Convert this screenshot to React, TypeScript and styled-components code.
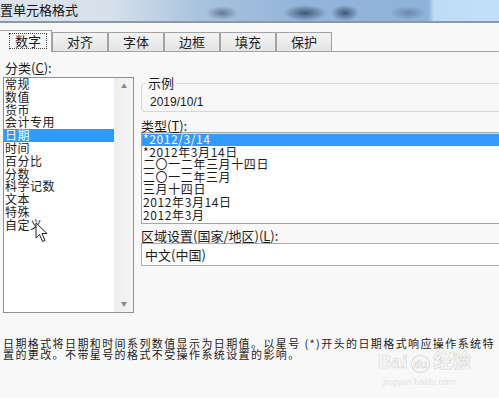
import React from "react";
import styled, { createGlobalStyle } from "styled-components";

const categories = [
  "常规",
  "数值",
  "货币",
  "会计专用",
  "日期",
  "时间",
  "百分比",
  "分数",
  "科学记数",
  "文本",
  "特殊",
  "自定义",
];

const dateTypes = [
  "*2012/3/14",
  "*2012年3月14日",
  "二〇一二年三月十四日",
  "二〇一二年三月",
  "三月十四日",
  "2012年3月14日",
  "2012年3月",
];

const tabs = ["数字", "对齐", "字体", "边框", "填充", "保护"];

const App = () => {
  return (
    <>
      <GlobalStyle />
      <Dialog>
        <TitleBar>置单元格格式</TitleBar>

        <TabRow>
          {tabs.map((t, i) => (
            <Tab key={t} $active={i === 0}>
              {i === 0 ? <FocusRect>{t}</FocusRect> : t}
            </Tab>
          ))}
        </TabRow>

        <Body>
          <LeftCol>
            <Label>
              分类(<u>C</u>):
            </Label>
            <CategoryList>
              <Items>
                {categories.map((c) => (
                  <Item key={c} $selected={c === "日期"}>
                    {c}
                  </Item>
                ))}
              </Items>
              <ScrollBar>
                <Arrow>▲</Arrow>
                <Arrow>▼</Arrow>
              </ScrollBar>
              <Cursor width="14" height="21" viewBox="0 0 14 21">
                <path
                  d="M1 1 L1 16 L4.5 12.5 L7.5 19.5 L10 18.4 L7 11.5 L12 11.5 Z"
                  fill="#fff"
                  stroke="#222"
                  strokeWidth="1"
                  strokeLinejoin="round"
                />
              </Cursor>
            </CategoryList>
          </LeftCol>

          <RightCol>
            <SampleBox>
              <Legend>示例</Legend>
              <SampleValue>2019/10/1</SampleValue>
            </SampleBox>

            <TypeLabel>
              类型(<u>T</u>):
            </TypeLabel>
            <TypeList>
              {dateTypes.map((d, i) => (
                <TypeItem key={d} $selected={i === 0}>
                  {d}
                </TypeItem>
              ))}
            </TypeList>

            <RegionLabel>
              区域设置(国家/地区)(<u>L</u>):
            </RegionLabel>
            <Combo>中文(中国)</Combo>
          </RightCol>
        </Body>

        <Description>
          日期格式将日期和时间系列数值显示为日期值。以星号 (*)开头的日期格式响应操作系统特
          <br />
          置的更改。不带星号的格式不受操作系统设置的影响。
        </Description>

        <Watermark>
          <WmLogo>
            Bai<WmPaw>du</WmPaw>经验
          </WmLogo>
          <WmUrl>jingyan.baidu.com</WmUrl>
        </Watermark>
      </Dialog>
    </>
  );
};

export default App;

const GlobalStyle = createGlobalStyle`
  html, body {
    margin: 0;
    padding: 0;
    background: #f8f8f8;
    overflow: hidden;
  }
  body {
    font-family: "Noto Sans CJK SC", "Liberation Sans", sans-serif;
    color: #1c1c1c;
  }
`;

const Dialog = styled.div`
  position: relative;
  width: 499px;
  height: 398px;
  overflow: hidden;
`;

const TitleBar = styled.div`
  height: 21px;
  border-bottom: 2px solid #8a98a8;
  font-size: 13px;
  line-height: 19px;
  color: #111;
  background:
    radial-gradient(ellipse 16px 7px at 222px 13px, rgba(45, 65, 95, 0.55), transparent),
    radial-gradient(ellipse 22px 8px at 305px 13px, rgba(35, 55, 85, 0.75), transparent),
    radial-gradient(ellipse 14px 8px at 345px 13px, rgba(35, 55, 85, 0.75), transparent),
    radial-gradient(ellipse 18px 7px at 408px 13px, rgba(60, 85, 120, 0.45), transparent),
    linear-gradient(
      90deg,
      #dde4ec 0,
      #d6e0eb 110px,
      #a9c3df 200px,
      #94b5d9 300px,
      #8fb2da 428px,
      #bddcf6 434px,
      #c2e0f9 100%
    );
`;

const TabRow = styled.div`
  display: flex;
  align-items: flex-end;
  padding-top: 7px;
  margin-left: -4px;
  border-bottom: 1px solid #a3a3a3;
`;

const Tab = styled.div<{ $active?: boolean }>`
  box-sizing: border-box;
  width: 56px;
  height: ${(p) => (p.$active ? "22px" : "19px")};
  margin-bottom: ${(p) => (p.$active ? "-1px" : "0")};
  border: 1px solid #a3a3a3;
  border-bottom: none;
  background: ${(p) =>
    p.$active ? "#f8f8f8" : "linear-gradient(#f4f4f4, #e4e4e4)"};
  font-size: 13px;
  line-height: ${(p) => (p.$active ? "19px" : "17px")};
  text-align: center;
  position: relative;
  z-index: ${(p) => (p.$active ? 1 : 0)};
`;

const FocusRect = styled.span`
  display: inline-block;
  margin-left: 8px;
  padding: 0 5px;
  line-height: 14px;
  outline: 1px dotted #444;
`;

const Body = styled.div`
  display: flex;
  padding-left: 3px;
`;

const LeftCol = styled.div`
  width: 131px;
  flex-shrink: 0;
`;

const Label = styled.div`
  margin-top: 9px;
  padding-left: 2px;
  font-size: 13px;
  line-height: 14px;
`;

const CategoryList = styled.div`
  position: relative;
  display: flex;
  box-sizing: border-box;
  height: 236px;
  margin-top: 2px;
  border: 1px solid #8f9092;
  background: #fff;
`;

const Items = styled.div`
  flex: 1;
`;

const Item = styled.div<{ $selected?: boolean }>`
  padding-left: 1px;
  font-size: 12px;
  letter-spacing: 0.5px;
  line-height: 12.8px;
  height: 12.8px;
  white-space: nowrap;
  background: ${(p) => (p.$selected ? "#3399ff" : "transparent")};
  color: ${(p) => (p.$selected ? "#fff" : "#1c1c1c")};
`;

const ScrollBar = styled.div`
  width: 18px;
  display: flex;
  flex-direction: column;
  justify-content: space-between;
  align-items: center;
  padding: 4px 0;
  border-left: 1px solid #ececec;
  background: linear-gradient(90deg, #eeeeee, #f5f5f5);
`;

const Arrow = styled.span`
  font-size: 6px;
  line-height: 8px;
  color: #888;
`;

const Cursor = styled.svg`
  position: absolute;
  left: 31px;
  top: 144px;
`;

const RightCol = styled.div`
  flex: 1;
  margin-left: 7px;
  margin-right: -40px;
  padding-top: 25px;
`;

const SampleBox = styled.fieldset`
  margin: 0;
  min-width: 0;
  padding: 6px 4px 2px;
  border: 1px solid #d2d8dd;
  border-radius: 4px;
`;

const Legend = styled.legend`
  padding: 0 2px;
  font-size: 13px;
  line-height: 12px;
`;

const SampleValue = styled.div`
  margin-left: 4px;
  font-family: "Liberation Sans", sans-serif;
  font-size: 12px;
  line-height: 14px;
`;

const TypeLabel = styled.div`
  margin-top: 8px;
  font-size: 13px;
  line-height: 12px;
`;

const TypeList = styled.div`
  box-sizing: border-box;
  height: 92px;
  border: 1px solid #a5a5a5;
  background: #fff;
`;

const TypeItem = styled.div<{ $selected?: boolean }>`
  padding-left: 1px;
  height: 12.6px;
  font-size: 12px;
  letter-spacing: 0.6px;
  line-height: 12.6px;
  white-space: nowrap;
  background: ${(p) => (p.$selected ? "#3399ff" : "transparent")};
  color: ${(p) => (p.$selected ? "#fff" : "#1c1c1c")};
  box-shadow: ${(p) => (p.$selected ? "inset 0 1px 0 #bfe6ff" : "none")};
`;

const RegionLabel = styled.div`
  margin-top: 5px;
  font-size: 13px;
  line-height: 13px;
`;

const Combo = styled.div`
  box-sizing: border-box;
  height: 23px;
  margin-top: 1px;
  padding-left: 3px;
  border: 1px solid #adadad;
  background: #fff;
  font-size: 13px;
  line-height: 21px;
`;

const Description = styled.div`
  margin-top: 25px;
  padding-left: 3px;
  font-size: 11px;
  letter-spacing: 1.4px;
  line-height: 10.5px;
  white-space: nowrap;
`;

const Watermark = styled.div`
  position: absolute;
  left: 378px;
  top: 352px;
  pointer-events: none;
`;

const WmLogo = styled.div`
  font-family: "Liberation Sans", "Noto Sans CJK SC", sans-serif;
  font-size: 19px;
  font-weight: bold;
  line-height: 20px;
  color: #fbfbfb;
  -webkit-text-stroke: 0.6px #d6d6d6;
`;

const WmPaw = styled.span`
  display: inline-block;
  margin: 0 3px;
  padding: 0 2px;
  font-size: 11px;
  line-height: 16px;
  border: 1.5px solid #dadada;
  border-radius: 50%;
`;

const WmUrl = styled.div`
  margin-top: 4px;
  margin-left: 5px;
  font-family: "Liberation Sans", sans-serif;
  font-size: 9px;
  color: #e2e2e2;
`;
